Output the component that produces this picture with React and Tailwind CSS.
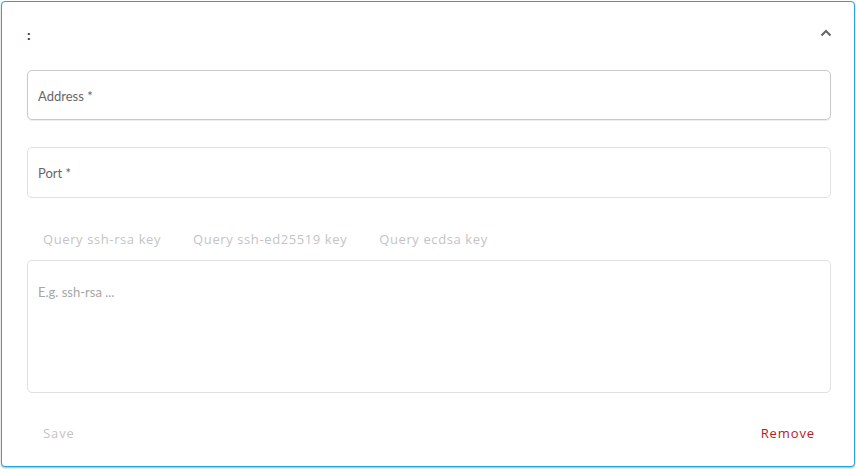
import React from 'react';

const font = { fontFamily: '"Source Sans Pro", Lato, "Noto Sans", sans-serif' };
const btnFont = { fontFamily: '"Open Sans", "Noto Sans", sans-serif' };

const Field = ({ label, strong, tall }) => (
  <div
    className={`${tall ? 'h-[51px]' : 'h-[50px]'} rounded-[5px] border flex items-center px-[10px] pt-[3px] ${strong ? 'border-[#c9c9c9] shadow-[0_1px_1px_rgba(0,0,0,0.08)]' : 'border-[#e0e0e0]'}`}
  >
    <span className="text-[13px] text-[#666]">{label}</span>
  </div>
);

export default function App() {
  return (
    <div className="w-[856px] h-[469px] bg-white p-px" style={font}>
      <div className="h-[466px] w-[854px] rounded-[4px] border border-[#19a9dc] shadow-[0_1px_2px_rgba(0,0,0,0.3)] bg-white flex flex-col pl-[25px] pr-[23px]">
        {/* header */}
        <div className="h-[68px] flex items-center justify-between">
          <span className="text-[14px] font-bold text-[#333] -mt-[3px]">:</span>
          <svg width="12" height="8" viewBox="0 0 12 8" className="mr-[-1px] -mt-[6px]">
            <path d="M1.5 6.5 L6 2 L10.5 6.5" fill="none" stroke="#666" strokeWidth="2" />
          </svg>
        </div>

        <div className="flex flex-col">
          <Field label="Address *" strong />
          <div className="h-[27px]" />
          <Field label="Port *" tall />
        </div>

        {/* query buttons */}
        <div className="h-[62px] flex items-center pt-[21px]">
          {['Query ssh-rsa key', 'Query ssh-ed25519 key', 'Query ecdsa key'].map((t) => (
            <button
              key={t}
              className="px-4 h-[36px] text-[13px] font-medium tracking-[0.6px] text-[#c4c4c4]"
              style={btnFont}
            >
              {t}
            </button>
          ))}
        </div>

        <div className="h-[133px] rounded-[5px] border border-[#e0e0e0] px-[10px] pt-[18px]">
          <span className="text-[13px] text-[#a6a6a6]">E.g. ssh-rsa ...</span>
        </div>

        {/* actions */}
        <div className="flex-1 flex items-center justify-between pt-[8px]">
          <button className="px-4 h-[36px] text-[13px] font-medium tracking-[0.9px] text-[#c4c4c4]" style={btnFont}>
            Save
          </button>
          <button className="px-4 h-[36px] text-[13px] font-medium tracking-[0.9px] text-[#b0202a]" style={btnFont}>
            Remove
          </button>
        </div>
      </div>
    </div>
  );
}
